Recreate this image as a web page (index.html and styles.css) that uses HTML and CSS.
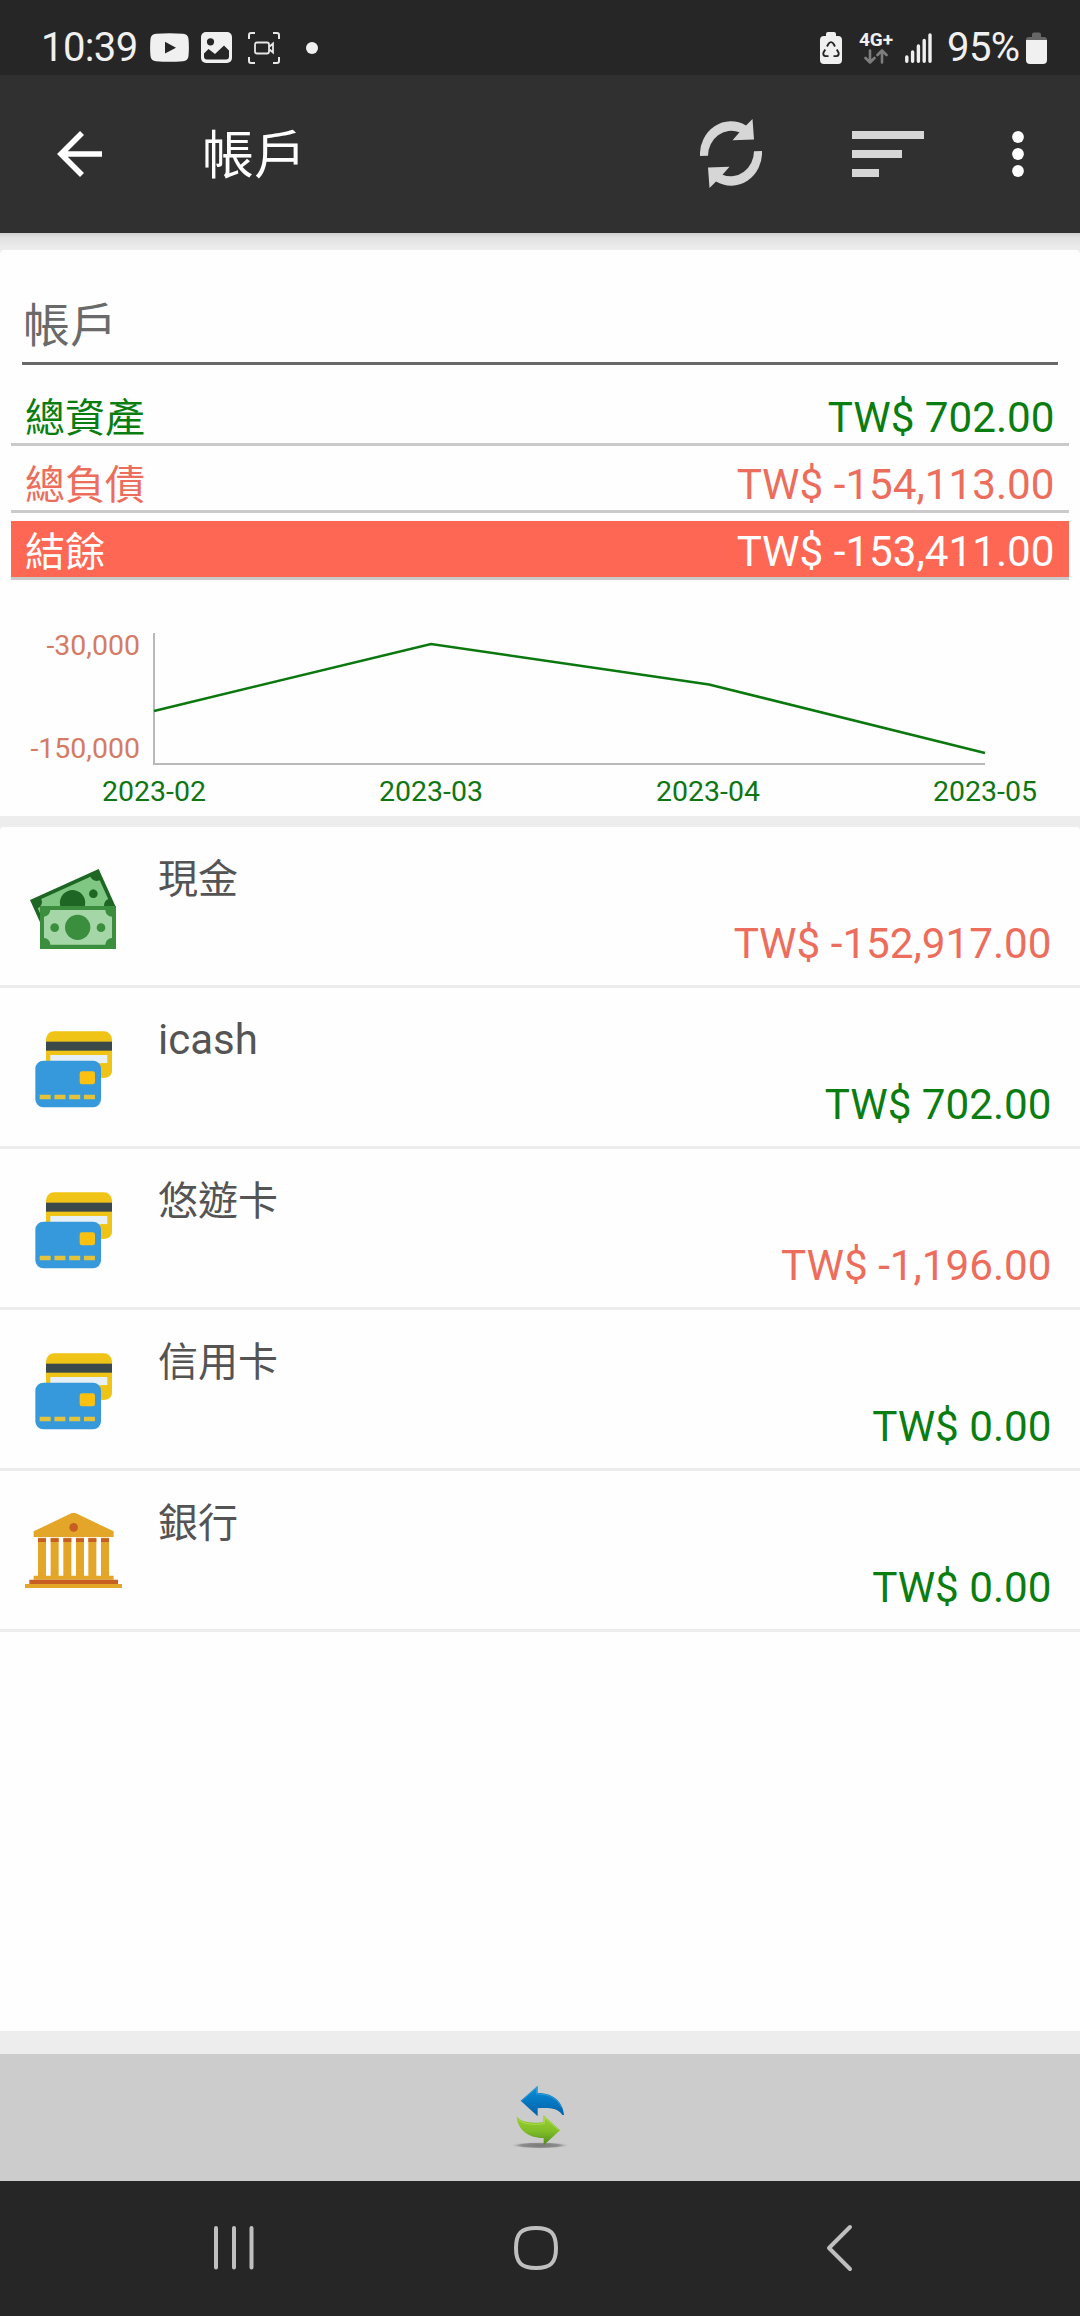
FILE: index.html
```html
<!DOCTYPE html>
<html lang="zh-Hant">
<head>
<meta charset="utf-8">
<title>帳戶</title>
<link rel="stylesheet" href="styles.css">
</head>
<body>
<svg width="0" height="0" class="defs">
  <defs>
    <symbol id="cards" viewBox="72 444 300 474">
      <rect x="138" y="574" width="198" height="139" rx="24" fill="#f0c416"/>
      <rect x="138" y="605" width="198" height="27" fill="#3b494a"/>
      <path d="M151 645H322V670H303V713H290V670H151z" fill="#e6f0f6"/>
      <path d="M290 670H336V689q0 24-24 24H290z" fill="#f0c416"/>
      <rect x="106" y="662" width="197" height="140" rx="24" fill="#3699dc"/>
      <rect x="239" y="694" width="46" height="39" rx="7" fill="#fcc110"/>
      <path d="M119 771H285" stroke="#e3c33c" stroke-width="13" stroke-dasharray="33 11.3"/>
    </symbol>
  </defs>
</svg>
<div class="screen">
  <header class="status">
    <div class="status-left">
      <span class="clock">10:39</span>
      <svg class="ic-video" width="39" height="29" viewBox="0 0 39 29"><path d="M6 .8Q19.500-.5 33 .8 38 1 38.500 6q.8 8.500 0 17-.5 5-5.500 5.300-13.500 1-27 0Q1 28 .5 23q-.8-8.500 0-17Q1 1 6 .8Z" fill="#f0f0f0"/><path d="M15 8.800v11.800l11-5.900z" fill="#262626"/></svg>
      <svg class="ic-photo" width="31" height="31" viewBox="0 0 31 31"><rect width="31" height="31" rx="5" fill="#f0f0f0"/><circle cx="9.500" cy="9.800" r="3.600" fill="#262626"/><path d="M3 21.500 7.500 17l6.500 5 9-8.500 5 5v6q0 3-3 3H6q-3 0-3-3z" fill="#262626"/></svg>
      <svg class="ic-capture" width="32" height="32" viewBox="0 0 32 32" fill="none" stroke="#e6e6e6" stroke-width="2"><path d="M1 7V3q0-2 2-2h4M25 1h4q2 0 2 2v4M31 25v4q0 2-2 2h-4M7 31H3q-2 0-2-2v-4"/><path d="M9 10.500h10q2 0 2 2v7q0 2-2 2H9q-2 0-2-2v-7q0-2 2-2zM21 15l4-3.500v9L21 17" stroke-width="1.800"/></svg>
      <span class="dot"></span>
    </div>
    <div class="status-right">
      <svg class="ic-recycle" width="22" height="32" viewBox="0 0 22 32"><path d="M6 4V2q0-2 2-2h6q2 0 2 2v2h2q4 0 4 4v20q0 4-4 4H4q-4 0-4-4V8q0-4 4-4z" fill="#f0f0f0"/><path d="M7 14.500 8.800 11.300q2.200-2.400 4.400 0L15 14.500M16.800 17.500l1.800 3.300q.6 3-2.200 3.300H13.500M8.500 24.100H5.600q-2.800-.3-2.200-3.300L5.200 17.500" fill="none" stroke="#262626" stroke-width="1.900"/></svg>
      <div class="net">
        <span class="net-label">4G+</span>
        <svg width="24" height="15" viewBox="0 0 24 15" fill="none" stroke="#7d7d7d" stroke-width="2.600" stroke-linecap="round" stroke-linejoin="round"><path d="M6 1.500v12M1.500 9 6 13.500 10.500 9M18 13.500v-12M13.500 6 18 1.500 22.500 6"/></svg>
      </div>
      <svg class="ic-signal" width="27" height="30" viewBox="0 0 27 30" stroke="#f0f0f0" stroke-width="3.400" stroke-linecap="round"><path d="M1.800 24v4.200M7.600 19v9.200M13.400 13v15.200M19.200 7.500v20.700M25 1.900v26.300"/></svg>
      <span class="percent">95%</span>
      <svg class="ic-battery" width="21" height="32" viewBox="0 0 21 32"><path d="M0 8q0-3 3-3h3V2.500Q6 .5 8 .5h5q2 0 2 2V5h3q3 0 3 3z" fill="#666"/><path d="M0 8h21v20q0 4-4 4H4q-4 0-4-4z" fill="#f0f0f0"/></svg>
    </div>
  </header>

  <nav class="appbar">
    <svg class="back" width="46" height="46" viewBox="0 0 46 46" fill="none" stroke="#fff" stroke-width="5.600"><path d="M45 23H4M25 2 4 23l21 21"/></svg>
    <h1 class="title">帳戶</h1>
    <svg class="sync" width="62" height="70" viewBox="0 0 62 70" fill="#d6d6d6"><path d="M0 37A31 33 0 0 1 46 6.500L52.500 0l1.500 20.500-21.500.8 7-8A23.500 25 0 0 0 8 36.700Z"/><path transform="rotate(180 31 34.500)" d="M0 37A31 33 0 0 1 46 6.500L52.500 0l1.500 20.500-21.500.8 7-8A23.500 25 0 0 0 8 36.700Z"/></svg>
    <svg class="sort" width="72" height="46" viewBox="0 0 72 46" fill="#d6d6d6"><path d="M0 0h72v8H0zM0 19h50v8H0zM0 38h27v8H0z"/></svg>
    <svg class="more" width="12" height="46" viewBox="0 0 12 46" fill="#fff"><circle cx="6" cy="6" r="5.900"/><circle cx="6" cy="23" r="5.900"/><circle cx="6" cy="40" r="5.900"/></svg>
  </nav>

  <main class="content">
    <section class="card summary">
      <h2 class="heading">帳戶</h2>
      <div class="total green"><span class="label">總資產</span><span class="amount">TW$ 702.00</span></div>
      <div class="total red"><span class="label">總負債</span><span class="amount">TW$ -154,113.00</span></div>
      <div class="total net-total"><span class="label">結餘</span><span class="amount">TW$ -153,411.00</span></div>
      <svg class="chart" width="1080" height="236" viewBox="0 580 1080 236">
        <path d="M154 633V764H985" fill="none" stroke="#b9b9b9" stroke-width="2"/>
        <path d="M154 711 431 644 709 684.500 985 753" fill="none" stroke="#0b770f" stroke-width="2.500"/>
        <g class="ylabels"><text x="140" y="655">-30,000</text><text x="140" y="758">-150,000</text></g>
        <g class="xlabels"><text x="154" y="801">2023-02</text><text x="431" y="801">2023-03</text><text x="708" y="801">2023-04</text><text x="985" y="801">2023-05</text></g>
      </svg>
    </section>

    <section class="card accounts">
      <article class="account">
        <svg class="icon" viewBox="72 -39 300 474">
          <g transform="translate(90 180) rotate(-24.300)">
            <path d="M0 0H226V126H0z" fill="#1d6623"/>
            <path d="M32 11H194A20 20 0 0 0 215 32V94A20 20 0 0 0 194 115H32A20 20 0 0 0 11 94V32A20 20 0 0 0 32 11z" fill="#80c784"/>
            <circle cx="113" cy="60" r="38" fill="#1d6623"/><circle cx="181" cy="61" r="13" fill="#1d6623"/>
          </g>
          <path d="M120 198H348V327H120z" fill="#3a8e3e"/>
          <path d="M151 210H316A20 20 0 0 0 336 230V294A20 20 0 0 0 316 314H151A20 20 0 0 0 132 294V230A20 20 0 0 0 151 210z" fill="#a5d6a7"/>
          <g fill="#3a8e3e"><circle cx="233" cy="262" r="38"/><circle cx="164" cy="263" r="13"/><circle cx="303" cy="263" r="13"/></g>
        </svg>
        <div class="info"><span class="name">現金</span><span class="amount red">TW$ -152,917.00</span></div>
      </article>
      <article class="account">
        <svg class="icon"><use href="#cards"/></svg>
        <div class="info"><span class="name latin">icash</span><span class="amount green">TW$ 702.00</span></div>
      </article>
      <article class="account">
        <svg class="icon"><use href="#cards"/></svg>
        <div class="info"><span class="name">悠遊卡</span><span class="amount red">TW$ -1,196.00</span></div>
      </article>
      <article class="account">
        <svg class="icon"><use href="#cards"/></svg>
        <div class="info"><span class="name">信用卡</span><span class="amount green">TW$ 0.00</span></div>
      </article>
      <article class="account">
        <svg class="icon" viewBox="72 33 300 474">
          <path d="M101 214 214 160q7-3 14 0l113 54v17H101z" fill="#e3a629"/>
          <circle cx="221" cy="202" r="13" fill="#c75f22"/>
          <path d="M114 233h24v115h-24zM152 233h24v115h-24zM190 233h24v115h-24zM228 233h24v115h-24zM265 233h24v115h-24zM303 233h24v115h-24zM101 347h240v12H101zM75 372h291v12H75z" fill="#e3a629"/>
          <path d="M114 235h24v11h-24zM152 235h24v11h-24zM190 235h24v11h-24zM228 235h24v11h-24zM265 235h24v11h-24zM303 235h24v11h-24zM88 359h266v13H88z" fill="#c75f22"/>
        </svg>
        <div class="info"><span class="name">銀行</span><span class="amount green">TW$ 0.00</span></div>
      </article>
    </section>
  </main>

  <footer class="transfer">
    <svg width="60" height="127" viewBox="330 162 180 381">
      <defs>
        <linearGradient id="blue" x1="0" y1="0" x2="0" y2="1"><stop offset="0" stop-color="#0a8fd6"/><stop offset=".5" stop-color="#0579c2"/><stop offset="1" stop-color="#0560a4"/></linearGradient>
        <linearGradient id="lime" x1="0" y1="0" x2="0" y2="1"><stop offset="0" stop-color="#9bd030"/><stop offset=".55" stop-color="#80bd28"/><stop offset="1" stop-color="#4b8a1c"/></linearGradient>
        <radialGradient id="shade"><stop offset="0" stop-color="#777"/><stop offset=".65" stop-color="#8d8d8d"/><stop offset="1" stop-color="#ccc" stop-opacity="0"/></radialGradient>
      </defs>
      <ellipse cx="420" cy="436" rx="90" ry="10" fill="url(#shade)"/>
      <path d="M362 302 413 257V279C458 278 489 305 492 345H487C474 324 445 323 413 325V349Z" fill="url(#blue)"/>
      <path d="M366 301 410 263V282C450 281 474 300 484 322" fill="none" stroke="#45a7df" stroke-width="2"/>
      <path d="M350 348C360 366 390 370 430 367V345L480 391 431 436V414C385 415 352 388 350 348Z" fill="url(#lime)"/>
      <path d="M356 359C368 373 400 375 433 371V352L475 390" fill="none" stroke="#b9e45e" stroke-width="2"/>
    </svg>
  </footer>

  <nav class="sysnav">
    <svg width="46" height="50" viewBox="0 0 46 50" stroke="#bfbfbf" stroke-width="4" stroke-linecap="round"><path d="M6 5v39.500M24 5v39.500M41.500 5v39.500"/></svg>
    <svg width="46" height="50" viewBox="0 0 46 50" fill="none" stroke="#bfbfbf" stroke-width="4"><path d="M23 5c14.500 0 20 5 20 20s-5.500 20-20 20S3 40 3 25 8.500 5 23 5z"/></svg>
    <svg width="46" height="50" viewBox="0 0 46 50" fill="none" stroke="#bfbfbf" stroke-width="4" stroke-linecap="round" stroke-linejoin="round"><path d="M34 4 13 25l21 21"/></svg>
  </nav>
</div>
</body>
</html>
```
FILE: styles.css
```css
* { box-sizing: border-box; }
body {
  margin: 0;
  font-family: Roboto, "Noto Sans CJK TC", sans-serif;
  background: #ededed;
}
svg { display: block; flex: none; }
.defs { position: absolute; }
.screen { width: 1080px; height: 2316px; display: flex; flex-direction: column; }

.status {
  height: 75px;
  background: #262626;
  color: #f0f0f0;
  display: flex;
  justify-content: space-between;
  padding: 0 33px 0 41px;
  font-size: 40px;
}
.status-left, .status-right { display: flex; align-items: center; height: 95px; }
.clock { width: 109px; line-height: 95px; letter-spacing: -0.6px; }
.ic-photo { margin-left: 12px; }
.ic-capture { margin-left: 16px; }
.dot { width: 12px; height: 12px; border-radius: 50%; background: #f0f0f0; margin-left: 26px; }
.ic-recycle { margin-right: 16px; }
.net { width: 36px; height: 33px; display: flex; flex-direction: column; align-items: center; justify-content: space-between; }
.net-label { font-size: 19px; font-weight: 700; line-height: 17px; }
.ic-signal { margin-left: 11px; }
.percent { margin-left: 15px; line-height: 95px; width: 77px; letter-spacing: -0.6px; }
.ic-battery { margin-left: 2px; }

.appbar {
  height: 158px;
  background: #303030;
  display: flex;
  align-items: center;
  padding: 0 56px 0 57px;
}
.title {
  margin: 0;
  margin-left: 99px;
  flex: 1;
  font-size: 52px;
  line-height: 60px;
  padding-top: 6px;
  font-weight: 400;
  color: #fff;
}
.sort { margin-left: 90px; }
.more { margin-left: 88px; }

.content {
  flex: 1;
  display: flex;
  flex-direction: column;
  gap: 11px;
  padding: 17px 0 23px;
  background: linear-gradient(#cfcfcf, #e2e2e2 5px, #ededed 16px) top / 100% 17px no-repeat, #ededed;
}
.card { background: #fefefe; border-radius: 4px 4px 0 0; }
.summary { height: 566px; display: flex; flex-direction: column; }
.heading {
  margin: 0 22px 14px;
  height: 115px;
  padding: 46px 1px 0;
  border-bottom: 3px solid #696969;
  font-size: 47px;
  font-weight: 400;
  line-height: 60px;
  color: #6a6a6a;
}
.total {
  height: 59px;
  margin: 8px 11px 0;
  padding: 5px 14.5px 0 14px;
  border-bottom: 3px solid #cacaca;
  display: flex;
  justify-content: space-between;
  align-items: baseline;
  line-height: 51px;
}
.label { font-size: 40px; }
.amount { font-size: 42.2px; }
.green { color: #0a7d10; }
.red { color: #ed6d5c; }
.net-total { background: #ff6755 padding-box; color: #fff; }
.chart { font-size: 28.5px; }
.ylabels { fill: #d57b65; text-anchor: end; }
.xlabels { fill: #0f7613; text-anchor: middle; }

.accounts { flex: 1; }
.account {
  height: 161px;
  border-bottom: 3px solid #ececec;
  display: flex;
  padding: 0 28.5px 0 24px;
}
.icon { width: 100px; height: 158px; }
.info {
  flex: 1;
  display: flex;
  flex-direction: column;
  gap: 14px;
  padding: 28px 0 0 34px;
  line-height: 50px;
}
.name { font-size: 40px; color: #545454; }
.name.latin { font-size: 42px; margin: -1px 0 1px; }
.info .amount { align-self: flex-end; }

.transfer { height: 127px; background: #ccc; display: flex; justify-content: center; }
.sysnav {
  height: 135px;
  background: #262626;
  display: grid;
  grid-template-columns: repeat(3, 1fr);
  place-items: center;
  padding: 0 90px 1px 82px;
}
```
